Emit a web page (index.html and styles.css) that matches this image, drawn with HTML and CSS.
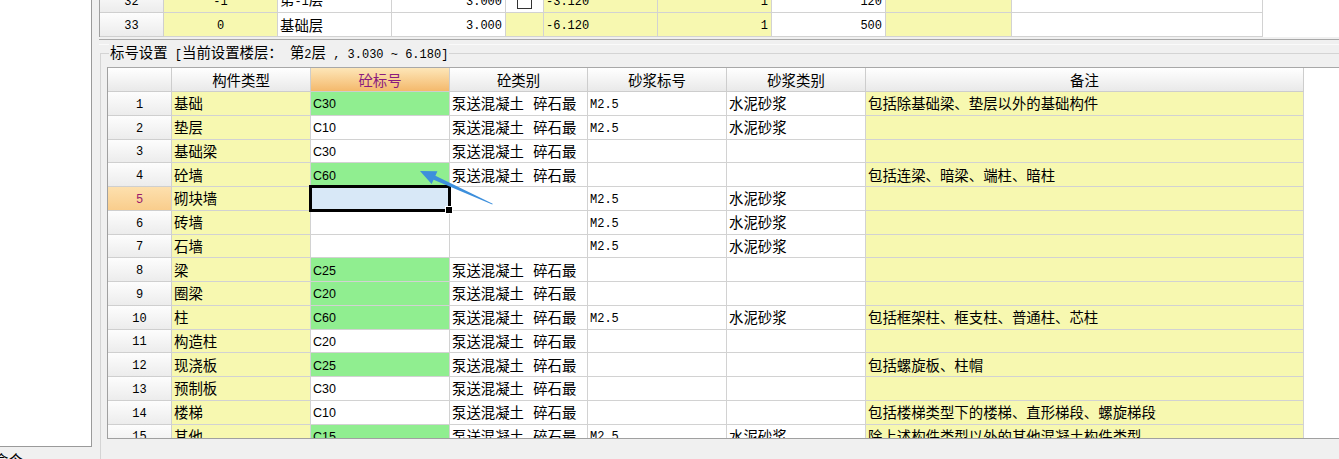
FILE: index.html
```html
<!DOCTYPE html>
<html lang="zh-CN">
<head>
  <meta charset="UTF-8">
  <title>楼层设置</title>
  <link rel="stylesheet" href="styles.css">
</head>
<body>

  <div class="app">
    <!-- 左侧树 -->
    <div class="side">
      <div class="tree"></div>
      <div class="cmd">命令</div>
    </div>

    <div class="main">
      <!-- 楼层列表 -->
      <div class="floors">
        <table class="ftable">
          <colgroup>
            <col style="width:64px"><col style="width:114px"><col style="width:114px"><col style="width:114px">
            <col style="width:38px"><col style="width:114px"><col style="width:114px"><col style="width:114px">
            <col style="width:126px"><col style="width:251px">
          </colgroup>
          <tr>
            <td class="rh"><span class="num">32</span></td>
            <td class="y c"><span class="num">-1</span></td>
            <td>第<span class="num">-1</span>层</td>
            <td class="r"><span class="num">3.000</span></td>
            <td class="c"><span class="chk"></span></td>
            <td class="y"><span class="num">-3.120</span></td>
            <td class="y r"><span class="num">1</span></td>
            <td class="r"><span class="num">120</span></td>
            <td class="y"></td>
            <td></td>
          </tr>
          <tr>
            <td class="rh"><span class="num">33</span></td>
            <td class="y c"><span class="num">0</span></td>
            <td>基础层</td>
            <td class="r"><span class="num">3.000</span></td>
            <td class="y"></td>
            <td class="y"><span class="num">-6.120</span></td>
            <td class="y r"><span class="num">1</span></td>
            <td class="r"><span class="num">500</span></td>
            <td class="y"></td>
            <td></td>
          </tr>
        </table>
      </div>

      <div class="split"></div>

      <!-- 标号设置 -->
      <div class="group">
        <div class="group-title">标号设置<span class="num"> [</span>当前设置楼层：<span class="num"> </span>第<span class="num">2</span>层<span class="num"> , 3.030 ~ 6.180]</span></div>
        <div class="grid">
          <table class="gtable">
            <colgroup>
              <col style="width:64px"><col style="width:139px"><col style="width:139px"><col style="width:138px">
              <col style="width:139px"><col style="width:139px"><col style="width:438px">
            </colgroup>
            <tr class="head">
              <th></th><th>构件类型</th><th class="hot">砼标号</th><th>砼类别</th><th>砂浆标号</th><th>砂浆类别</th><th>备注</th>
            </tr>
            <tr>
              <td class="rh"><span class="num">1</span></td><td class="y">基础</td><td class="g"><span class="grade">C30</span></td>
              <td class="kind">泵送混凝土 碎石最</td><td><span class="num">M2.5</span></td><td>水泥砂浆</td><td class="y">包括除基础梁、垫层以外的基础构件</td>
            </tr>
            <tr>
              <td class="rh"><span class="num">2</span></td><td class="y">垫层</td><td><span class="grade">C10</span></td>
              <td class="kind">泵送混凝土 碎石最</td><td><span class="num">M2.5</span></td><td>水泥砂浆</td><td class="y"></td>
            </tr>
            <tr>
              <td class="rh"><span class="num">3</span></td><td class="y">基础梁</td><td><span class="grade">C30</span></td>
              <td class="kind">泵送混凝土 碎石最</td><td></td><td></td><td class="y"></td>
            </tr>
            <tr>
              <td class="rh"><span class="num">4</span></td><td class="y">砼墙</td><td class="g"><span class="grade">C60</span></td>
              <td class="kind">泵送混凝土 碎石最</td><td></td><td></td><td class="y">包括连梁、暗梁、端柱、暗柱</td>
            </tr>
            <tr>
              <td class="rh cur"><span class="num">5</span></td><td class="y">砌块墙</td><td class="sel"></td>
              <td></td><td><span class="num">M2.5</span></td><td>水泥砂浆</td><td class="y"></td>
            </tr>
            <tr>
              <td class="rh"><span class="num">6</span></td><td class="y">砖墙</td><td></td>
              <td></td><td><span class="num">M2.5</span></td><td>水泥砂浆</td><td class="y"></td>
            </tr>
            <tr>
              <td class="rh"><span class="num">7</span></td><td class="y">石墙</td><td></td>
              <td></td><td><span class="num">M2.5</span></td><td>水泥砂浆</td><td class="y"></td>
            </tr>
            <tr>
              <td class="rh"><span class="num">8</span></td><td class="y">梁</td><td class="g"><span class="grade">C25</span></td>
              <td class="kind">泵送混凝土 碎石最</td><td></td><td></td><td class="y"></td>
            </tr>
            <tr>
              <td class="rh"><span class="num">9</span></td><td class="y">圈梁</td><td class="g"><span class="grade">C20</span></td>
              <td class="kind">泵送混凝土 碎石最</td><td></td><td></td><td class="y"></td>
            </tr>
            <tr>
              <td class="rh"><span class="num">10</span></td><td class="y">柱</td><td class="g"><span class="grade">C60</span></td>
              <td class="kind">泵送混凝土 碎石最</td><td><span class="num">M2.5</span></td><td>水泥砂浆</td><td class="y">包括框架柱、框支柱、普通柱、芯柱</td>
            </tr>
            <tr>
              <td class="rh"><span class="num">11</span></td><td class="y">构造柱</td><td><span class="grade">C20</span></td>
              <td class="kind">泵送混凝土 碎石最</td><td></td><td></td><td class="y"></td>
            </tr>
            <tr>
              <td class="rh"><span class="num">12</span></td><td class="y">现浇板</td><td class="g"><span class="grade">C25</span></td>
              <td class="kind">泵送混凝土 碎石最</td><td></td><td></td><td class="y">包括螺旋板、柱帽</td>
            </tr>
            <tr>
              <td class="rh"><span class="num">13</span></td><td class="y">预制板</td><td><span class="grade">C30</span></td>
              <td class="kind">泵送混凝土 碎石最</td><td></td><td></td><td class="y"></td>
            </tr>
            <tr>
              <td class="rh"><span class="num">14</span></td><td class="y">楼梯</td><td><span class="grade">C10</span></td>
              <td class="kind">泵送混凝土 碎石最</td><td></td><td></td><td class="y">包括楼梯类型下的楼梯、直形梯段、螺旋梯段</td>
            </tr>
            <tr>
              <td class="rh"><span class="num">15</span></td><td class="y">其他</td><td class="g"><span class="grade">C15</span></td>
              <td class="kind">泵送混凝土 碎石最</td><td><span class="num">M2.5</span></td><td>水泥砂浆</td><td class="y">除上述构件类型以外的其他混凝土构件类型</td>
            </tr>
          </table>
        </div>
      </div>
    </div>

    <!-- 标注箭头 -->
    <svg class="arrow" width="1339" height="459" viewBox="0 0 1339 459">
      <polygon points="420,171 437.4,171.3 435.4,175.7 492.7,203.8 492.3,204.6 433.6,179.7 431.6,184.1" fill="#3d8fdc"/>
    </svg>
  </div>

</body>
</html>
```

FILE: styles.css
```css
* {
  box-sizing: border-box;
}

body {
  margin: 0;
  background: #f0f0f0;
  font-family: "Noto Sans CJK SC", sans-serif;
  font-size: 14.4px;
  color: #000;
  overflow: hidden;
}

.app {
  position: relative;
  display: flex;
  width: 1339px;
  height: 459px;
  overflow: hidden;
}

.side {
  width: 92px;
  flex: none;
  display: flex;
  flex-direction: column;
}

.tree {
  height: 447px;
  flex: none;
  background: #fff;
  border-right: 1px solid #9a9a9a;
  border-bottom: 1px solid #9a9a9a;
}

.cmd {
  flex: none;
  margin: 5px 0 0 -6px;
  line-height: 16px;
  white-space: nowrap;
}

.main {
  flex: 1;
  min-width: 0;
  margin-left: 7px;
  display: flex;
  flex-direction: column;
}

.num {
  font-family: "Liberation Mono", monospace;
  font-size: 12px;
}

.grade {
  font-family: "Liberation Sans", sans-serif;
  font-size: 12.5px;
}

/* 楼层列表 */
.floors {
  height: 37px;
  flex: none;
  overflow: hidden;
  background: #fff;
  border-left: 1px solid #a0a0a0;
}

.ftable {
  table-layout: fixed;
  border-collapse: separate;
  border-spacing: 0;
  width: 1163px;
  margin-top: -11px;
}

.ftable tr {
  height: 24px;
}

table td, table th {
  padding: 0 2px;
  border-right: 1px solid #d2d2d2;
  border-bottom: 1px solid #d2d2d2;
  white-space: nowrap;
  overflow: hidden;
  line-height: 16px;
  font-weight: normal;
  vertical-align: middle;
  text-align: left;
}

td.y {
  background: #f7f8b0;
}

td.g {
  background: #90ee90;
}

td.r {
  text-align: right;
  padding-right: 3px;
}

td.c {
  text-align: center;
}

td.kind {
  word-spacing: 6px;
}

td.rh {
  text-align: center;
  background: linear-gradient(#fdfdfd, #ececec);
  border-color: #cfcfcf;
}

.chk {
  display: inline-block;
  width: 15px;
  height: 15px;
  border: 1px solid #333;
  background: #fff;
  vertical-align: middle;
  margin-top: -2px;
}

.split {
  flex: none;
  margin-top: 2px;
  height: 6px;
  border-top: 1px solid #a8a8a8;
  border-bottom: 1px solid #fafafa;
}

/* 标号设置 */
.group {
  flex: 1;
  margin: 8px 0 0 1px;
  border-top: 1px solid #d4d4d4;
  border-left: 1px solid #d4d4d4;
  display: flex;
  flex-direction: column;
}

.group-title {
  width: fit-content;
  height: 16px;
  margin: -10px 0 0 8px;
  padding: 0 1px;
  background: #f0f0f0;
  line-height: 16px;
  white-space: nowrap;
}

.grid {
  margin: 7px 0 0 6px;
  height: 372px;
  flex: none;
  overflow: hidden;
  background: #fff;
  border-top: 1px solid #a8a8a8;
  border-left: 1px solid #a0a0a0;
  border-bottom: 1px solid #a0a0a0;
}

.gtable {
  table-layout: fixed;
  border-collapse: separate;
  border-spacing: 0;
  width: 1196px;
}

.gtable tr {
  height: 23.75px;
}

.gtable tr.head {
  height: 24px;
}

.gtable th {
  text-align: center;
  background: linear-gradient(#ffffff, #e9e9e9);
  border-color: #cdcdcd;
}

.gtable th.hot {
  background: linear-gradient(#fde6b8, #f4b96c);
  color: #8a1b7e;
}

.gtable td.cur {
  background: linear-gradient(#fde0ae, #f9cd8c);
  color: #9a1a6c;
}

td.sel {
  position: relative;
  background: #d8e8f7;
  overflow: visible;
}

td.sel::after {
  content: "";
  position: absolute;
  left: -2px;
  top: -2px;
  right: -2px;
  bottom: -2px;
  border: 3px solid #000;
}

td.sel::before {
  content: "";
  position: absolute;
  right: -4px;
  bottom: -4px;
  width: 6px;
  height: 6px;
  background: #000;
  border: 1px solid #fff;
  z-index: 1;
}

.arrow {
  position: absolute;
  left: 0;
  top: 0;
  pointer-events: none;
}
```
